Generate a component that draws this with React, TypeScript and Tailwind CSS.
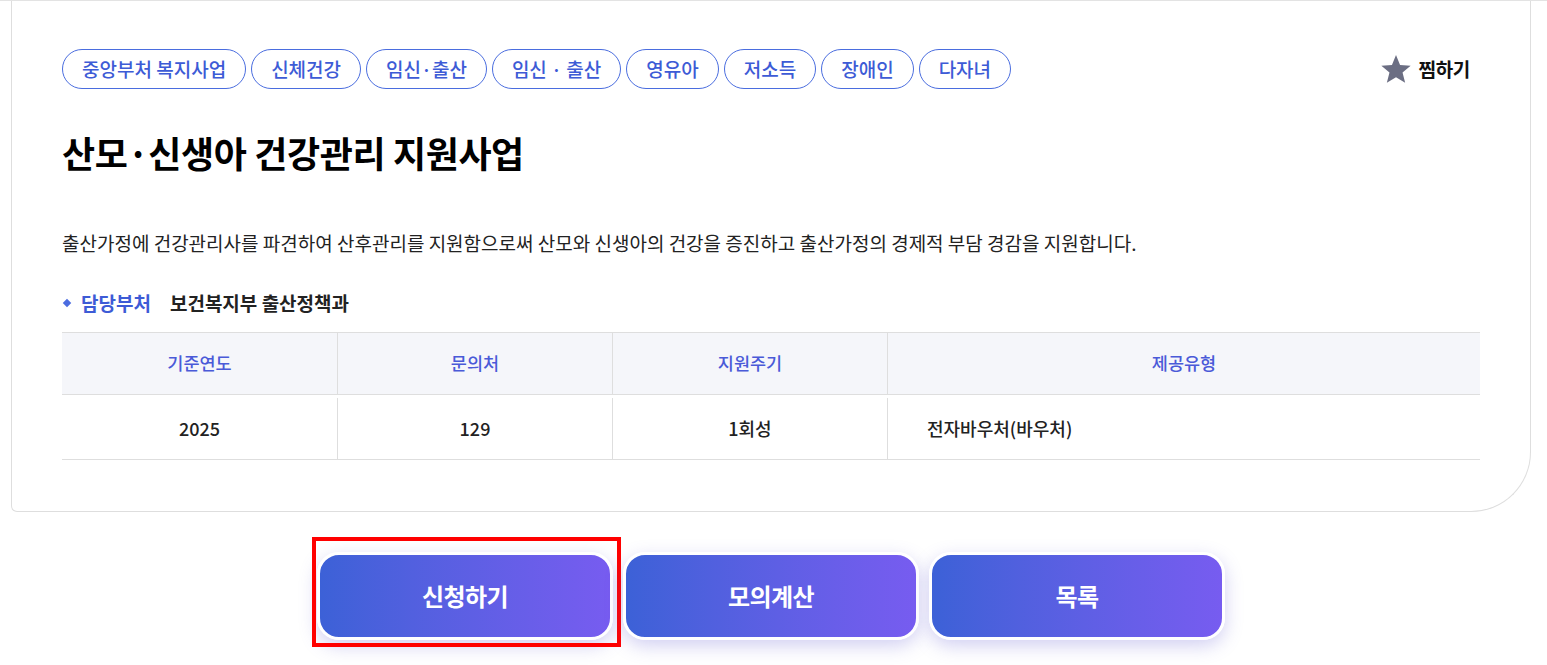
import React from "react";

const tags = ["중앙부처 복지사업", "신체건강", "임신·출산", "임신 · 출산", "영유아", "저소득", "장애인", "다자녀"];

function Star() {
  return (
    <svg width="34" height="33" viewBox="0 0 24 24" aria-hidden="true">
      <path
        d="M12 1.5l2.95 7.15 7.7.55-5.9 4.95 1.9 7.55L12 17.6l-6.65 4.1 1.9-7.55-5.9-4.95 7.7-.55z"
        fill="#6b6e83"
      />
    </svg>
  );
}

export default function App() {
  const font = { fontFamily: '"Noto Sans CJK KR", "Noto Sans", sans-serif' };
  return (
    <div className="w-[1547px] h-[665px] bg-white overflow-hidden" style={font}>
      <div className="border-t border-[#e3e3e3]">
        <div className="ml-[11px] w-[1520px] border-x border-b border-[#dedede] rounded-bl-[6px] rounded-br-[60px] px-[50px] pt-[48px] pb-[51px] bg-white">
          <div className="flex items-center justify-between">
            <div className="flex gap-[5px]">
              {tags.map((t) => (
                <span
                  key={t}
                  className="h-[40px] px-[19px] flex items-center rounded-full border border-[#4a6ddf] text-[#3d5bd6] text-[19px] font-medium"
                >
                  {t}
                </span>
              ))}
            </div>
            <div className="flex items-center gap-[5px] mr-[10px]">
              <Star />
              <span className="text-[19px] font-bold text-[#111] tracking-[-0.3px]">찜하기</span>
            </div>
          </div>

          <h1 className="mt-[40px] text-[36px] leading-[46px] font-bold text-black tracking-[-0.4px]">
            산모·신생아 건강관리 지원사업
          </h1>

          <p className="mt-[55px] text-[19px] leading-[26px] text-[#222]">
            출산가정에 건강관리사를 파견하여 산후관리를 지원함으로써 산모와 신생아의 건강을 증진하고 출산가정의 경제적 부담 경감을 지원합니다.
          </p>

          <div className="mt-[34px] flex items-center h-[26px] text-[19px]">
            <span className="w-[6px] h-[6px] bg-[#4b6ce0] rotate-45 ml-[2px] mr-[11px]" />
            <span className="font-semibold text-[#3d5bd6]">담당부처</span>
            <span className="ml-[19px] font-semibold text-[#222]">보건복지부 출산정책과</span>
          </div>

          <div className="mt-[16px] border-t border-b border-[#dedede]">
            <div className="grid grid-cols-[275px_275px_275px_1fr] h-[62px] bg-[#f5f6fa] border-b border-[#dedede] text-[17.5px] text-[#4a5ad8] font-medium">
              <div className="flex items-center justify-center">기준연도</div>
              <div className="flex items-center justify-center border-l border-[#dedede]">문의처</div>
              <div className="flex items-center justify-center border-l border-[#dedede]">지원주기</div>
              <div className="flex items-center justify-center border-l border-[#dedede]">제공유형</div>
            </div>
            <div className="grid grid-cols-[275px_275px_275px_1fr] h-[64px] pt-[3px] text-[18px] text-[#222] font-medium">
              <div className="flex items-center justify-center">2025</div>
              <div className="flex items-center justify-center border-l border-[#dedede]">129</div>
              <div className="flex items-center justify-center border-l border-[#dedede]">1회성</div>
              <div className="flex items-center pl-[39px] border-l border-[#dedede]">전자바우처(바우처)</div>
            </div>
          </div>
        </div>
      </div>

      <div className="mt-[40px] flex justify-center gap-[10px] pr-[5px]">
        {["신청하기", "모의계산", "목록"].map((b, i) => (
          <div key={b} className="relative">
            {i === 0 && (
              <div className="absolute -left-[5px] -right-[8px] -top-[15px] -bottom-[7px] border-[4px] border-[#ff0000] pointer-events-none" />
            )}
            <button
              className="w-[296px] h-[88px] rounded-[22px] border-[3px] border-white bg-linear-to-r from-[#3c61d7] to-[#775cf0] text-white text-[24px] font-bold tracking-[-0.6px] shadow-[0_6px_18px_rgba(95,85,210,0.28)]"
              style={font}
            >
              {b}
            </button>
          </div>
        ))}
      </div>
    </div>
  );
}
